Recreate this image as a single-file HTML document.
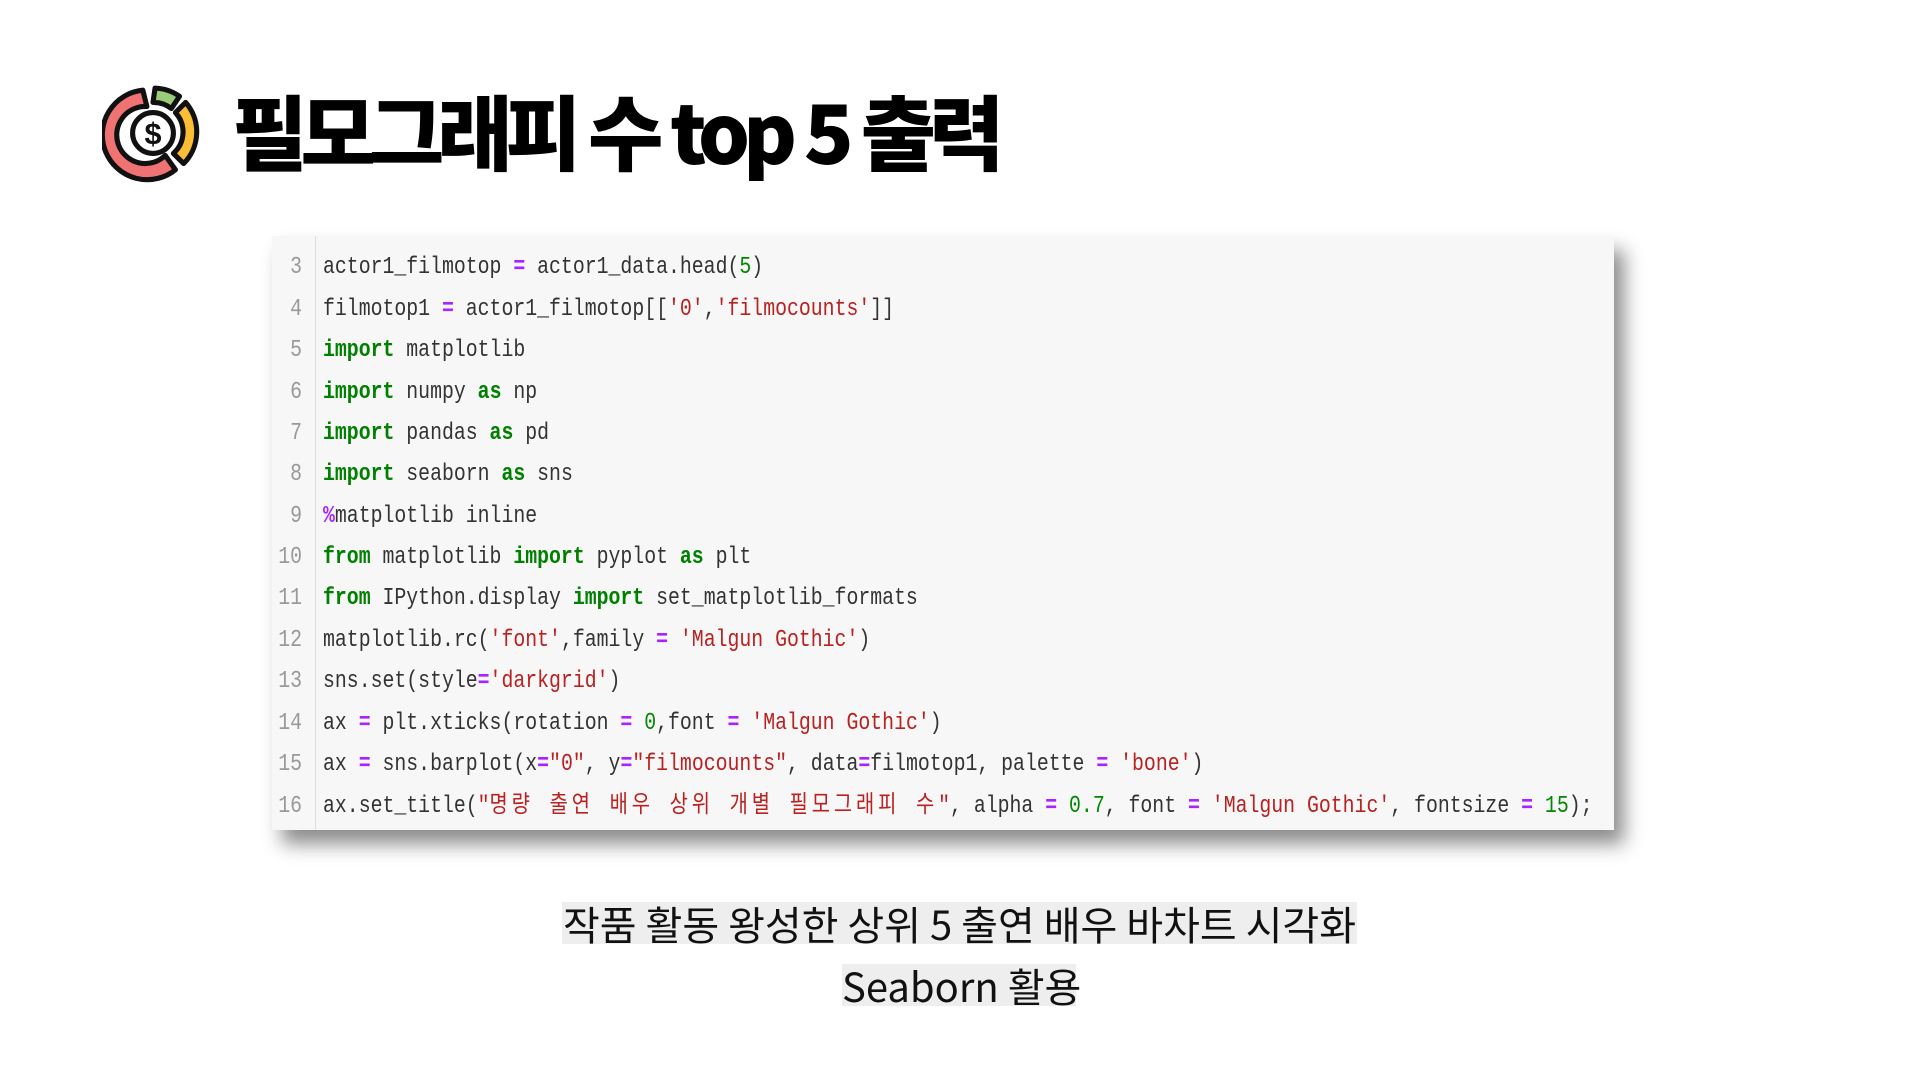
<!DOCTYPE html>
<html><head><meta charset="utf-8"><style>
body{margin:0;width:1920px;height:1080px;background:#fff;position:relative;overflow:hidden;font-family:"Liberation Sans","Noto Sans CJK KR",sans-serif}
.title{position:absolute;left:232px;top:80px;font-family:"Noto Sans CJK KR",sans-serif;font-weight:900;font-size:82px;letter-spacing:-7px;word-spacing:2px;color:#000;white-space:nowrap;line-height:1.2}
.box{position:absolute;left:272px;top:236px;width:1342px;height:594px;background:#f7f7f7;box-shadow:10px 14px 18px rgba(0,0,0,.45)}
.gut{position:absolute;left:43px;top:0;bottom:0;border-left:1px solid #ddd}
.ln{position:absolute;left:0;width:30px;text-align:right;color:#999;font-family:"Liberation Mono",monospace;font-size:24px;line-height:30px;height:30px;transform:scaleX(.826);transform-origin:right}
.cd{position:absolute;left:51px;white-space:pre;font-family:"Liberation Mono","Noto Sans CJK KR",monospace;font-size:24px;line-height:30px;height:30px;color:#333;transform:scaleX(.826);transform-origin:left}
.k{color:#008000;font-weight:bold}.o{color:#aa22ff;font-weight:bold}.s{color:#ba2121}.n{color:#080}
.ko{letter-spacing:4.7px;line-height:30px}
.cap{position:absolute;background:#eee;color:#111;font-family:"Noto Sans CJK KR",sans-serif;font-size:40px;line-height:42px;white-space:nowrap;text-align:center;overflow:visible}
</style></head><body>
<svg style="position:absolute;left:102px;top:82px" width="102" height="102" viewBox="0 0 100 100">
<g stroke="#111" stroke-width="5" stroke-linejoin="round">
<path d="M40 8 A44 44 0 1 0 72 86 L62 72 A28 28 0 1 1 44 24 Z" fill="#f07374"/>
<path d="M52 6 A44 44 0 0 1 76 14 L68 26 A28 28 0 0 0 50 20 Z" fill="#9bcc7a"/>
<path d="M82 20 A44 44 0 0 1 80 80 L70 70 A28 28 0 0 0 72 30 Z" fill="#fbbd36"/>
<circle cx="50" cy="50" r="20" fill="#fff"/>
</g>
<text x="50" y="61" text-anchor="middle" font-family="Liberation Sans" font-weight="bold" font-size="30" fill="#111">$</text>
</svg>
<div class="title">필모그래피 수 top 5 출력</div>
<div class="box"><div class="gut"></div>
<div class="ln" style="top:17px">3</div><div class="cd" style="top:17px">actor1_filmotop <span class="o">=</span> actor1_data.head(<span class="n">5</span>)</div>
<div class="ln" style="top:59px">4</div><div class="cd" style="top:59px">filmotop1 <span class="o">=</span> actor1_filmotop[[<span class="s">'0'</span>,<span class="s">'filmocounts'</span>]]</div>
<div class="ln" style="top:100px">5</div><div class="cd" style="top:100px"><span class="k">import</span> matplotlib</div>
<div class="ln" style="top:142px">6</div><div class="cd" style="top:142px"><span class="k">import</span> numpy <span class="k">as</span> np</div>
<div class="ln" style="top:183px">7</div><div class="cd" style="top:183px"><span class="k">import</span> pandas <span class="k">as</span> pd</div>
<div class="ln" style="top:224px">8</div><div class="cd" style="top:224px"><span class="k">import</span> seaborn <span class="k">as</span> sns</div>
<div class="ln" style="top:266px">9</div><div class="cd" style="top:266px"><span class="o">%</span>matplotlib inline</div>
<div class="ln" style="top:307px">10</div><div class="cd" style="top:307px"><span class="k">from</span> matplotlib <span class="k">import</span> pyplot <span class="k">as</span> plt</div>
<div class="ln" style="top:348px">11</div><div class="cd" style="top:348px"><span class="k">from</span> IPython.display <span class="k">import</span> set_matplotlib_formats</div>
<div class="ln" style="top:390px">12</div><div class="cd" style="top:390px">matplotlib.rc(<span class="s">'font'</span>,family <span class="o">=</span> <span class="s">'Malgun Gothic'</span>)</div>
<div class="ln" style="top:431px">13</div><div class="cd" style="top:431px">sns.set(style<span class="o">=</span><span class="s">'darkgrid'</span>)</div>
<div class="ln" style="top:473px">14</div><div class="cd" style="top:473px">ax <span class="o">=</span> plt.xticks(rotation <span class="o">=</span> <span class="n">0</span>,font <span class="o">=</span> <span class="s">'Malgun Gothic'</span>)</div>
<div class="ln" style="top:514px">15</div><div class="cd" style="top:514px">ax <span class="o">=</span> sns.barplot(x<span class="o">=</span><span class="s">"0"</span>, y<span class="o">=</span><span class="s">"filmocounts"</span>, data<span class="o">=</span>filmotop1, palette <span class="o">=</span> <span class="s">'bone'</span>)</div>
<div class="ln" style="top:556px">16</div><div class="cd" style="top:556px">ax.set_title(<span class="s">"<span class="ko">명량 출연 배우 상위 개별 필모그래피 수</span>"</span>, alpha <span class="o">=</span> <span class="n">0.7</span>, font <span class="o">=</span> <span class="s">'Malgun Gothic'</span>, fontsize <span class="o">=</span> <span class="n">15</span>);</div>
</div>
<div class="cap" style="left:562px;top:902px;width:795px">작품 활동 왕성한 상위 5 출연 배우 바차트 시각화</div>
<div class="cap" style="left:842px;top:964px;width:234px">Seaborn 활용</div>
</body></html>
